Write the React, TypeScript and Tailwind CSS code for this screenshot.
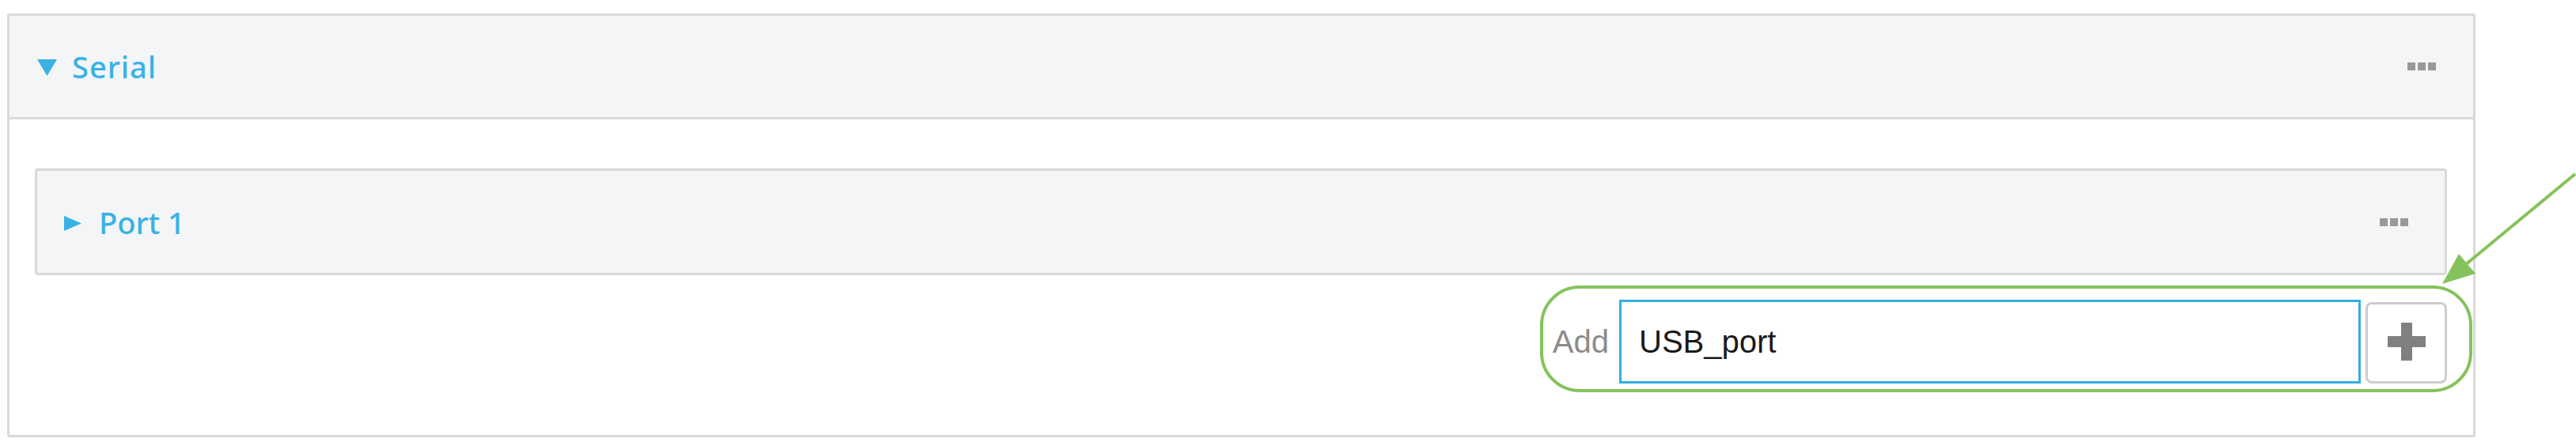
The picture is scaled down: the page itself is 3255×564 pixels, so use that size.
import React from "react";

function Dots() {
  return (
    <div className="flex gap-[3px]">
      <span className="block w-[10px] h-[10px] bg-[#999999]" />
      <span className="block w-[10px] h-[10px] bg-[#999999]" />
      <span className="block w-[10px] h-[10px] bg-[#999999]" />
    </div>
  );
}

export default function App() {
  return (
    <div
      className="relative w-[3255px] h-[564px] bg-white overflow-hidden pt-[17px] pl-[9px]"
      style={{ fontFamily: '"Noto Sans", "Open Sans", sans-serif' }}
    >
      <div className="w-[3119px] h-[536px] border-[3px] border-[#d9d9d9] rounded-[3px] bg-white">
        <div className="h-[131px] border-b-[3px] border-[#d9d9d9] bg-[#f4f5f7] flex items-center pl-[35px] pr-[47px]">
          <svg width="25" height="21" viewBox="0 0 25 21" className="mr-[19px] mt-[2px]">
            <polygon points="0,0 25,0 12.5,21" fill="#38b2e5" />
          </svg>
          <span className="text-[38px] leading-none font-medium text-[#38b2e5] tracking-[1px]">Serial</span>
          <div className="ml-auto">
            <Dots />
          </div>
        </div>
        <div className="pt-[62px] pl-[32px] pr-[33px]">
          <div className="h-[135px] border-[3px] border-[#d9d9d9] rounded-[4px] bg-[#f4f5f7] flex items-center pl-[34px] pr-[46px]">
            <svg width="22" height="19" viewBox="0 0 22 19" className="mr-[22px] mt-[4px]">
              <polygon points="0,0 22,9.5 0,19" fill="#38b2e5" />
            </svg>
            <span className="text-[38px] leading-none font-medium text-[#38b2e5]">Port 1</span>
            <div className="ml-auto">
              <Dots />
            </div>
          </div>
          <div className="mt-[31px] flex justify-end items-end">
            <span
              className="self-center mr-[13px] text-[40px] leading-none text-[#8c8c8c]"
              style={{ fontFamily: '"Liberation Sans", Arial, sans-serif' }}
            >
              Add
            </span>
            <div
              className="w-[937px] h-[106px] border-[3px] border-[#35aee0] bg-white flex items-center pl-[22px] text-[40px] leading-none text-[#1a1a1a]"
              style={{ fontFamily: '"Liberation Sans", Arial, sans-serif' }}
            >
              USB_port
            </div>
            <div className="ml-[6px] w-[103px] h-[103px] border-[3px] border-[#cccccc] rounded-[8px] bg-white flex items-center justify-center">
              <svg width="48" height="48" viewBox="0 0 48 48" className="-mt-[4px]">
                <rect x="17" y="0" width="14" height="48" fill="#808080" />
                <rect x="0" y="17" width="48" height="14" fill="#808080" />
              </svg>
            </div>
          </div>
        </div>
      </div>

      <div className="absolute left-[1946px] top-[361px] w-[1178px] h-[135px] border-[4px] border-[#84c35c] rounded-[50px] pointer-events-none" />

      <svg
        className="absolute left-0 top-0 pointer-events-none"
        width="3255"
        height="564"
        viewBox="0 0 3255 564"
      >
        <line x1="3254" y1="220" x2="3115" y2="335" stroke="#84c35c" strokeWidth="4" />
        <polygon points="3086,359 3107,321 3128,346" fill="#84c35c" />
      </svg>
    </div>
  );
}
